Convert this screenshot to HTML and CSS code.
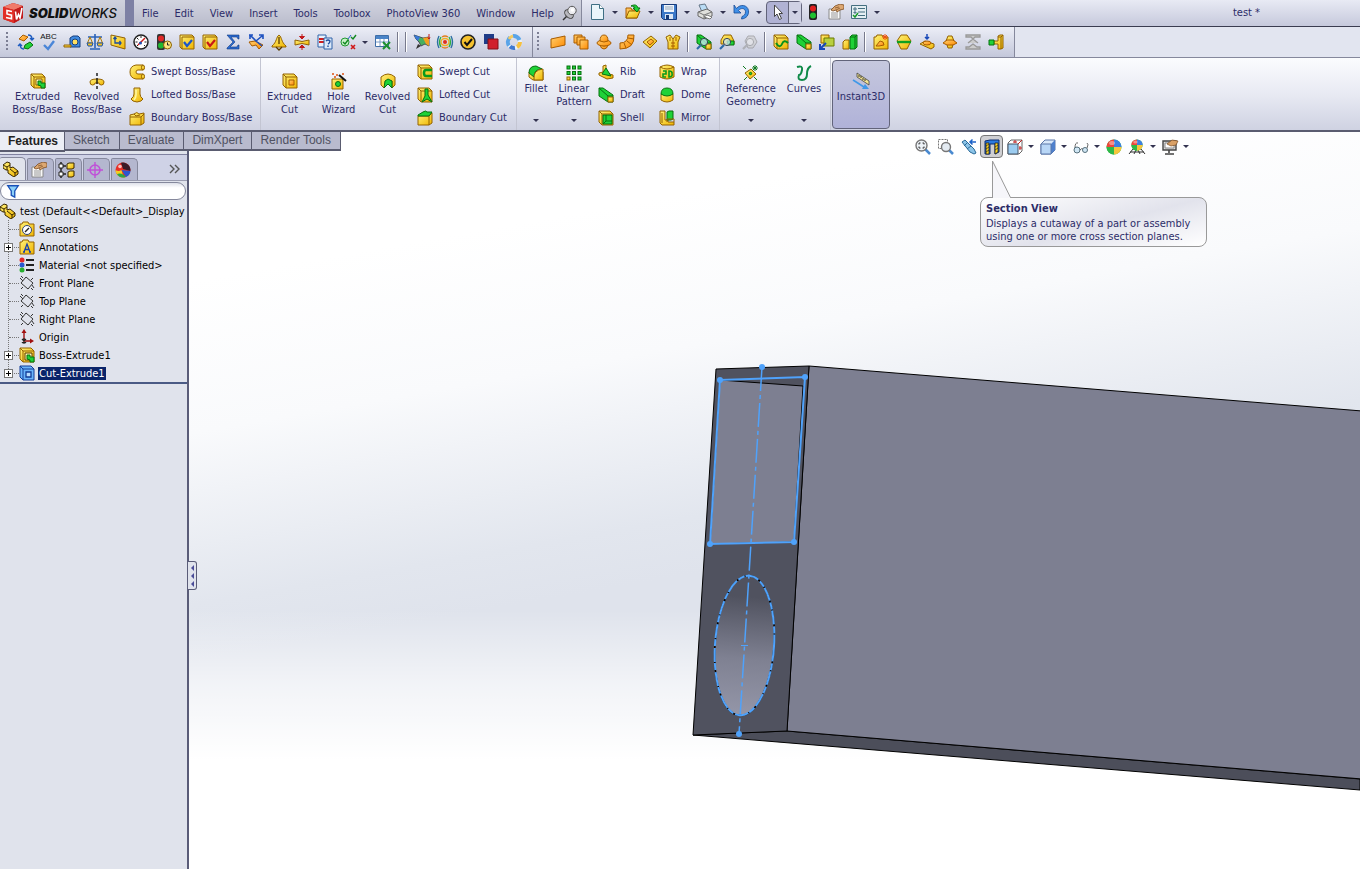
FILE: index.html
```html
<!DOCTYPE html>
<html lang="en">
<head>
<meta charset="utf-8">
<title>SolidWorks - test</title>
<link rel="stylesheet" href="styles.css">
</head>
<body>
<svg class="defs" aria-hidden="true">
<defs>
<linearGradient id="gy" x1="0" y1="0" x2="1" y2="1"><stop offset="0" stop-color="#fff27a"/><stop offset="1" stop-color="#f0b400"/></linearGradient>
<linearGradient id="go" x1="0" y1="0" x2="1" y2="1"><stop offset="0" stop-color="#ffd070"/><stop offset="1" stop-color="#ff8a00"/></linearGradient>
</defs>
<symbol id="box" viewBox="0 0 16 16"><path class="y" d="M1 1h11l3 3v11H4l-3-3z"/><path class="ly" d="M1 1l3 3h11M4 4v11"/></symbol>
<symbol id="part" viewBox="0 0 16 16"><path class="y dk" d="M0 4l4-3 3 1v5l3-1 5 4v3l-4 3-6-4V9L3 9 0 7z"/><path class="ly dk" d="M0 4l4 2v3M4 6l3-2M7 8l5 4v3M12 12l3-2"/></symbol>
<symbol id="draft" viewBox="0 0 16 16"><path class="g" d="M1 1h4l10 7v7h-5L1 9z"/><path class="lg" d="M1 1l9 8h5M10 9v6"/><path class="y" d="M10 10h5v5h-5z"/></symbol>
<symbol id="lens" viewBox="0 0 16 16"><path d="M5 11l-4 4" stroke="#2b6aa8" stroke-width="2.2"/><circle cx="8" cy="8" r="3.6" fill="#cfeaf8" fill-opacity=".75" stroke="#345"/></symbol>
<symbol id="plane" viewBox="0 0 16 16"><path d="M7 2l7 6-5 6-7-6zM1 3l3 3M2 1l2 2M12 13l2 2M13 10l2 3M4 12l-2 2M14 3l-2 2" fill="none" stroke="#333"/></symbol>
<symbol id="folder" viewBox="0 0 16 16"><path class="y" d="M1 3h2l1-2h5l1 2h5v12H1z"/></symbol>
<symbol id="ball" viewBox="0 0 16 16"><circle cx="8" cy="8" r="7.5" fill="#2fb848"/><path d="M8 8V.5A7.500 7.500 0 0 0 .5 8z" fill="#f0453a"/><path d="M8 8V.5A7.500 7.500 0 0 1 15.500 8z" fill="#3e7fe0"/><path d="M8 8v7.500A7.500 7.500 0 0 0 15.500 8z" fill="#f6c63c"/><path d="M8 8H.5A7.500 7.500 0 0 0 8 15.500z" fill="#2fb848"/><ellipse cx="6" cy="4" rx="3" ry="2" fill="#fff" opacity=".4"/></symbol>
<symbol id="hand" viewBox="0 0 16 16"><path d="M1 5h11v10H1z" fill="#f8f8f8" stroke="#888"/><path d="M3 9h7M3 11h7M3 13h7" stroke="#999"/><path d="M3 6l4-4 5-2 4 1v4l-4 1-3 2-1-2-3 1z" fill="#dda872" stroke="#7a4a20" stroke-width=".8"/><path d="M7 4l4-1M8 6l4-2" stroke="#7a4a20" stroke-width=".7"/></symbol>
</svg>

<header class="titlebar">
  <div class="brand">
    <svg class="cube" viewBox="0 0 22 22" aria-hidden="true"><path d="M1 5l10-4 10 3v12l-9 5L1 17z" fill="#b01414"/><path d="M1 5l10-4 10 3-9 4z" fill="#f07a6a"/><path d="M12 8l9-4v12l-9 5z" fill="#c21a1a"/><path d="M1 5l11 3v13L1 17z" fill="#e22e26"/><path d="M10 9.500L5 8.500v3.500l4.500 1.200v3.500L4 15.500M13.500 9.500l1 8 2-5 1.500 3.500 2-10" fill="none" stroke="#fff" stroke-width="1.600"/></svg>
    <span class="name"><b>SOLID</b>WORKS</span>
  </div>
  <nav class="menu" aria-label="Main menu">
    <button>File</button><button>Edit</button><button>View</button><button>Insert</button><button>Tools</button><button>Toolbox</button><button>PhotoView 360</button><button>Window</button><button>Help</button>
    <button class="pin" aria-label="Pin menu"><svg viewBox="0 0 16 16"><path d="M6 10l-5 5" stroke="#333" stroke-width="1.500"/><ellipse cx="7" cy="9" rx="5" ry="3.500" transform="rotate(45 7 9)" fill="#b8b8be" stroke="#444"/><circle cx="10" cy="5.500" r="4.200" fill="#ececf0" stroke="#555"/><circle cx="10.500" cy="5" r="1.800" fill="#fff"/></svg></button>
  </nav>
  <div class="quick" role="toolbar" aria-label="Standard">
    <button class="qb" aria-label="New"><svg viewBox="0 0 16 16"><path d="M2.500.5h8l4 4v11h-12z" fill="#eaf5fa" stroke="#3f6f84"/><path d="M10.500.5v4h4" fill="#fff" stroke="#3f6f84"/></svg></button><button class="drop" aria-label="New options"></button>
    <button class="qb" aria-label="Open"><svg viewBox="0 0 16 16"><path class="o" d="M1 4h5l1 2h5v8H1z"/><path class="y" d="M1 14l3-7h11l-3 7z"/><path class="g" d="M6 2c4-2 6-1 7 2h2l-3 4-4-4h2c0-1-2-2-4-2z"/></svg></button><button class="drop" aria-label="Open options"></button>
    <button class="qb" aria-label="Save"><svg viewBox="0 0 16 16"><path d="M.5.5h15v15h-13l-2-2z" fill="#3c78c8" stroke="#173a7a"/><path d="M3 1h10v7H3z" fill="#eef4fb"/><path d="M4 3h8M4 5h8" stroke="#9ab"/><path d="M4 10h8v5H4z" fill="#dbe6f4"/><path d="M5 11h3v4H5z" fill="#173a7a"/></svg></button><button class="drop" aria-label="Save options"></button>
    <button class="qb" aria-label="Print"><svg viewBox="0 0 16 16"><path d="M2 1l6-1 3 6-6 2z" fill="#b9dcf5" stroke="#678"/><path d="M1 8l9-3 5 3v4l-8 3-6-3z" fill="#e0e0dc" stroke="#666"/><path d="M1 8l6 3 8-3M7 11v4" fill="none" stroke="#777"/><path d="M7 13l6 2 2-2-5-2z" fill="#fff" stroke="#777"/></svg></button><button class="drop" aria-label="Print options"></button>
    <button class="qb" aria-label="Undo"><svg viewBox="0 0 16 16"><path d="M1 1v8h7L5.500 6.500C8 3.500 12 4 12.500 7.500c.3 3-2 4.500-3.500 5l-.5 2.500c5-.5 7.500-4 7-8.500C14.500 1 7.500-.5 3.500 4.500z" fill="#3f8fe8" stroke="#164a94" stroke-width=".8"/></svg></button><button class="drop" aria-label="Undo options"></button>
    <div class="split"><button class="qb" aria-label="Select"><svg viewBox="0 0 16 16"><path d="M4.500 1v11.500l2.500-2.500 2.500 5.500 2-1-2.500-5h3.500z" fill="#fff" stroke="#444"/></svg></button><button class="drop" aria-label="Select options"></button></div>
    <button class="qb" aria-label="Rebuild"><svg viewBox="0 0 16 16"><rect x="4" y="0" width="8" height="16" rx="2" fill="#222"/><circle cx="8" cy="4.500" r="3" fill="#e02020"/><circle cx="8" cy="11.500" r="3" fill="#20c030"/></svg></button>
    <button class="qb" aria-label="File properties"><svg><use href="#hand"/></svg></button>
    <button class="qb" aria-label="Options"><svg viewBox="0 0 16 16"><path d="M.5 1.500h15v13H.5z" fill="#e4eef2" stroke="#456f80"/><path d="M3 4h2v2H3zM3 8h2v1H3zM7 4.500h7M7 8h7M7 11.500h7" fill="none" stroke="#456f80"/><path d="M2 11l2 2 3-4" fill="none" stroke="#1a9a2a" stroke-width="1.500"/></svg></button><button class="drop" aria-label="More options"></button>
  </div>
  <h1 class="doc">test *</h1>
</header>

<div class="tools">
  <div class="band" role="toolbar" aria-label="Tools">
    <i class="grip"></i>
    <button class="tb" aria-label="Exchange"><svg viewBox="0 0 16 16"><path class="o" d="M1 5l4-4 5 2-4 4z"/><path class="g" d="M7 11l5-3 3 3-5 4-4-1z"/><path d="M10 1c3 0 4 1 4 4m-2-1l2 2 2-2M6 15c-3 0-4-2-4-5m-2 2l2-2 2 2" fill="none" stroke="#1a5ac0" stroke-width="1.400"/></svg></button>
    <button class="tb spell" aria-label="Spelling"><span>ABC</span><svg viewBox="0 0 16 10"><path d="M3 4l4 4 6-8" fill="none" stroke="#4a86d8" stroke-width="2.400"/></svg></button>
    <button class="tb" aria-label="Measure"><svg viewBox="0 0 16 16"><path d="M6 4l3-2h5l2 2v9H6z" fill="#3f8ae0" stroke="#143c7c"/><circle cx="11" cy="8" r="3" fill="#ffe060" stroke="#143c7c"/><path class="y" d="M0 11h7v2H0z"/></svg></button>
    <button class="tb" aria-label="Mass properties"><svg viewBox="0 0 16 16"><path d="M8 0v14M3 15h10M1 3h14" stroke="#2a62b8" stroke-width="1.600"/><path d="M3 3L.5 9h5zM13 3l-2.500 6h5z" fill="none" stroke="#b07a00"/><path d="M0 9h6l-1 3H1zM10 9h6l-1 3h-4z" fill="#f4c020" stroke="#1f56a8"/></svg></button>
    <button class="tb" aria-label="Section properties"><svg viewBox="0 0 16 16"><path class="y" d="M1 1l14 3v11L1 11z"/><path d="M5 3v6h6M3.500 5L5 3l1.500 2M9.500 7L11 9l-1.500 2" fill="none" stroke="#1c4ea0" stroke-width="1.300"/></svg></button>
    <button class="tb" aria-label="Sensor"><svg viewBox="0 0 16 16"><circle cx="8" cy="8" r="7" fill="#fff" stroke="#222" stroke-width="1.500"/><path d="M8 2v2M2.500 8h2M4 4l1.500 1.500M11.500 8h2M4 12l1-1M12 12l-1-1" stroke="#222"/><path d="M5 11l7-7" stroke="#d01818" stroke-width="1.500"/><circle cx="7.500" cy="9" r="1.500" fill="#2050b0"/></svg></button>
    <button class="tb" aria-label="Performance"><svg viewBox="0 0 16 16"><rect x="1" width="8" height="16" rx="2" fill="#333"/><circle cx="5" cy="4.500" r="3" fill="#e02828"/><circle cx="5" cy="11.500" r="3" fill="#20b830"/><circle cx="11.500" cy="11" r="4" fill="#ffe680" stroke="#8a6000"/><path d="M11.500 8.500V11h2" fill="none" stroke="#222"/></svg></button>
    <button class="tb" aria-label="Check sketch"><svg viewBox="0 0 16 16"><path class="y" d="M1 1h12l2 2v12H3l-2-2z"/><path class="ly" d="M3 15V3h12"/><path d="M5 8l3 4 5-6" fill="none" stroke="#1c56c8" stroke-width="2.200"/></svg></button>
    <button class="tb" aria-label="Check"><svg viewBox="0 0 16 16"><path class="y" d="M1 1h12l2 2v12H3l-2-2z"/><path class="ly" d="M3 15V3h12"/><path d="M5 8l3 4 5-6" fill="none" stroke="#c81818" stroke-width="2.200"/></svg></button>
    <button class="tb" aria-label="Equations"><svg viewBox="0 0 16 16"><path d="M2 1h12v4h-1l-1-2H6l4 5-5 5h7l1-2h1v4H2v-1l6-6-6-7z" fill="#2a6ad0" stroke="#123a80" stroke-width=".6"/></svg></button>
    <button class="tb" aria-label="Deviation"><svg viewBox="0 0 16 16"><path class="o" d="M1 8l6-1 8 4-4 4-3-4-4 1z"/><path d="M8 7L3 2m5 5l6-5M1 1h4M2 1v4M11 1h4v4M8 7l6 5" fill="none" stroke="#1c50c0" stroke-width="1.600"/></svg></button>
    <button class="tb" aria-label="Import diagnostics"><svg viewBox="0 0 16 16"><path class="y" d="M8 1c3 2 2 7 7 11v1H1v-1c5-4 4-9 7-11z"/><path d="M8 3v7M5 13l3 3 3-3" fill="none" stroke="#5a3c00" stroke-width="1.300"/></svg></button>
    <button class="tb" aria-label="Thickness analysis"><svg viewBox="0 0 16 16"><path class="y" d="M1 6q7 3 14 0v5q-7-3-14 0z"/><path d="M8 0v4M8 12v4M5.500 2.500L8 5l2.500-2.500zM5.500 13.500L8 11l2.500 2.500z" fill="#d02020" stroke="#c01818"/></svg></button>
    <button class="tb" aria-label="Compare documents"><svg viewBox="0 0 16 16"><path d="M1 1h8v12H1z" fill="#eaf2fc" stroke="#2f62a8"/><path d="M2 5h5M2 8h5" stroke="#d02020" stroke-width="1.800"/><path d="M7 4h8v11H7z" fill="#dbe8f8" stroke="#2f62a8"/><path d="M9 7q2-2 4 0 0 2-2 3m0 1.500v1.500" fill="none" stroke="#2050a0" stroke-width="1.400"/></svg></button>
    <button class="tb" aria-label="Feature check"><svg viewBox="0 0 16 16"><circle cx="5" cy="8" r="4" fill="#c8f0c8" stroke="#209830"/><path d="M3 8l2 2 3-4M11 3l2 2 3-4" fill="none" stroke="#108820" stroke-width="1.400"/><path d="M11 11l4 4m0-4l-4 4" stroke="#d01818" stroke-width="1.600"/><path d="M8 5l3-4" stroke="#2a62c8"/></svg></button><button class="drop narrow" aria-label="Feature check options"></button>
    <button class="tb" aria-label="Design table"><svg viewBox="0 0 16 16"><path d="M.5 1.500h13v11H.5z" fill="#fff" stroke="#3f6ea8"/><path d="M1 2h12v3H1z" fill="#4a84c8"/><path d="M1 8h12M5 5v7M9 5v7" stroke="#7a9cc8"/><path d="M8 8l7 7m0-7l-7 7" stroke="#1c9030" stroke-width="2"/></svg></button>
    <i class="sep"></i><i class="sep"></i>
    <button class="tb" aria-label="Simulation"><svg viewBox="0 0 16 16"><path d="M0 1l9 3 6-1v9l-4-2-4 2-2-4-3-3z" fill="#48b060" stroke="#334" stroke-width=".8"/><path d="M9 4l6-1v9l-3-2z" fill="#f0a020"/><path d="M0 1l6 2-2 4-2-2z" fill="#3878d8"/><path d="M2 15l2-5 3 2z" fill="#333"/><path d="M15 0v5m-1.500-1.500L15 5l1-1.500" stroke="#c01818" fill="none"/></svg></button>
    <button class="tb" aria-label="Zebra stripes"><svg viewBox="0 0 16 16"><circle cx="8" cy="8" r="2" fill="#e03020"/><g fill="none" stroke-width="1.400"><ellipse cx="8" cy="8" rx="4" ry="3.500" stroke="#f0b020"/><path d="M4 3q-3 5 0 10m8-10q3 5 0 10" stroke="#30b040"/><path d="M2 2q-3 6 0 12m12-12q3 6 0 12" stroke="#2a70a0"/></g><path d="M5 3q3-2 6 0M5 13q3 2 6 0" fill="none" stroke="#e08020" stroke-width="1.500"/></svg></button>
    <button class="tb" aria-label="Design check"><svg viewBox="0 0 16 16"><circle cx="8" cy="8" r="7" fill="#f6c22e" stroke="#222" stroke-width="1.600"/><path d="M4.500 8l2.500 3 5-6" fill="none" stroke="#111" stroke-width="2"/></svg></button>
    <button class="tb" aria-label="Compare geometry"><svg viewBox="0 0 16 16"><path d="M1 0h10v10H1z" fill="#1f3c88"/><path d="M5 5h10v10H5z" fill="#d0202c" stroke="#801018"/></svg></button>
    <button class="tb" aria-label="Costing"><svg viewBox="0 0 16 16"><circle cx="8" cy="8" r="6" fill="none" stroke="#e8f0f8" stroke-width="4"/><path d="M3 11.500A6 6 0 0 1 4 3.500M7 2A6 6 0 0 1 13.500 6" fill="none" stroke="#5aa4e8" stroke-width="4"/><path d="M14 8A6 6 0 0 1 11 13" fill="none" stroke="#f6c040" stroke-width="4"/><path d="M9 14A6 6 0 0 1 4 12.500" fill="none" stroke="#3f78d0" stroke-width="4"/><path d="M3 5A6 6 0 0 1 7 2" fill="none" stroke="#f2c860" stroke-width="3"/></svg></button>
  </div>
  <div class="band" role="toolbar" aria-label="Mold tools">
    <i class="grip"></i>
    <button class="tb" aria-label="Planar surface"><svg viewBox="0 0 16 16"><path class="o" d="M1 5l14-3v9L1 14z"/></svg></button>
    <button class="tb" aria-label="Offset surface"><svg viewBox="0 0 16 16"><path class="o" d="M1 1h8v8H1z"/><path class="o" d="M4 3h8v8H4z"/><path class="o" d="M7 6h8v9H7z"/></svg></button>
    <button class="tb" aria-label="Radiate surface"><svg viewBox="0 0 16 16"><path class="o" d="M4 11q4 2 8 0-1 4-4 4t-4-4z"/><ellipse class="o" cx="8" cy="9" rx="7" ry="3"/><path class="o" d="M4 7q0-6 4-6t4 6q-4 2-8 0z"/></svg></button>
    <button class="tb" aria-label="Swept surface"><svg viewBox="0 0 16 16"><path class="o" d="M9 1h6q1 14-14 14V9q8 0 8-8z"/><path class="lo" d="M9 4l6 1M8 7l5 4M5 9l2 5"/></svg></button>
    <button class="tb" aria-label="Surface fill"><svg viewBox="0 0 16 16"><path class="y" d="M1 8l8-6 6 5-7 7z"/><path class="o" d="M5 8l4-3 3 2.500L8 11z"/></svg></button>
    <button class="tb" aria-label="Knit surface"><svg viewBox="0 0 16 16"><path class="y" d="M1 3l4-2 3 4 3-4 4 2-2 5v7H3V8z"/><path class="lo" d="M8 5v10M5 3v4M11 3v4M6 9h4M6 12h4"/></svg></button>
    <i class="sep"></i>
    <button class="tb" aria-label="Draft analysis"><svg><use href="#draft"/><use href="#lens"/></svg></button>
    <button class="tb" aria-label="Undercut analysis"><svg viewBox="0 0 16 16"><path class="y" d="M2 6l3-5h7l3 6v3H2z"/><path class="g" d="M8 7h7v4H9z"/><use href="#lens"/></svg></button>
    <button class="tb" aria-label="Parting line analysis" disabled><svg class="dim" viewBox="0 0 16 16"><path d="M3 7l3-5h6l3 6-4 6H6z" fill="#ccc" stroke="#888"/><path d="M5 11l-4 4" stroke="#999" stroke-width="2.200"/><circle cx="8" cy="8" r="3.600" fill="#e8e8e8" stroke="#888"/></svg></button>
    <i class="sep"></i>
    <button class="tb" aria-label="Split line"><svg viewBox="0 0 16 16"><use href="#box"/><path d="M3 9q4 6 6 1t6-1" fill="none" stroke="#08901c" stroke-width="2"/></svg></button>
    <button class="tb" aria-label="Mold draft"><svg><use href="#draft"/></svg></button>
    <button class="tb" aria-label="Move face"><svg viewBox="0 0 16 16"><path class="y" d="M2 1h8v8H2z"/><path d="M5 4h10v8H5z" fill="#b8d040" stroke="#6a7a00"/><path d="M7 9l-5 5m-1-4v5h5" fill="none" stroke="#1848b8" stroke-width="2"/></svg></button>
    <button class="tb" aria-label="Scale"><svg viewBox="0 0 16 16"><path class="y" d="M1 8l2-2h4v9H1z"/><path class="g" d="M8 3l2-2h5v12l-2 2H8z"/><path class="lg" d="M8 3h5v12M13 3l2-2"/></svg></button>
    <i class="sep"></i>
    <button class="tb" aria-label="Insert mold folders"><svg viewBox="0 0 16 16"><use href="#folder"/><path class="o" d="M3 12l4-5 3 1 1 3-5 1z"/><path d="M12 0v6M9 3h6M10 1l4 4m0-4l-4 4" stroke="#f05010"/></svg></button>
    <button class="tb" aria-label="Parting lines"><svg viewBox="0 0 16 16"><path class="y" d="M1 7l4-6h6l4 6-4 8H5z"/><path d="M1 8h14" stroke="#10a020" stroke-width="2.400"/></svg></button>
    <button class="tb" aria-label="Shut-off surfaces"><svg viewBox="0 0 16 16"><path class="y" d="M1 10l5-3 9 3v3l-3 2z"/><ellipse class="o" cx="8" cy="9" rx="4" ry="2"/><path d="M8 0v5M6 3l2 2 2-2" fill="none" stroke="#1848b8" stroke-width="1.500"/></svg></button>
    <button class="tb" aria-label="Parting surfaces"><svg viewBox="0 0 16 16"><path class="y" d="M4 7l2-5h4l2 5-2 7H6z"/><path class="o" d="M1 9l4-3h6l4 3-4 2H5z"/></svg></button>
    <button class="tb" aria-label="Tooling split" disabled><svg viewBox="0 0 16 16"><path d="M1 1h14v2h-5l-2 2-2-2H1zM1 15h14v-2h-3l-4-3-4 3H1zM3 9l5-4 5 4" fill="#ccc" stroke="#999" stroke-width="1.300"/></svg></button>
    <button class="tb" aria-label="Core"><svg viewBox="0 0 16 16"><path class="y" d="M6 7h4V2l2-1h3v13l-2 1h-3V10H6z"/><path class="g" d="M1 6h5v5H1z"/><path class="ly" d="M13 3v12M10 3h3l2-2"/></svg></button>
  </div>
</div>

<section class="ribbon" aria-label="Features">
  <div class="group">
    <button class="big boss"><svg viewBox="0 0 16 16"><use href="#box"/><path d="M6 6h6v6H6z" fill="#fff9c0" stroke="#8a5c00"/><path class="g" d="M8 8h3v2h4v5h-4v-2L8 12z"/></svg>Extruded<br>Boss/Base</button>
    <button class="big boss"><svg viewBox="0 0 16 16"><path class="y" d="M1 9q0-3 7-3t7 3q0 3-2.500 3T10 10H6q0 2-2.500 2T1 9z"/><path d="M8 0v3M8 5v6M8 13v3" stroke="#111" stroke-width="1.400"/></svg>Revolved<br>Boss/Base</button>
    <div class="stack boss-list">
      <button><svg viewBox="0 0 16 16"><path class="y" d="M14 1H7Q1 2 1 8t6 7h7v-5H9q-2 0-2-2t2-2h5z"/><ellipse class="y" cx="14" cy="3.500" rx="1.500" ry="2.500"/><ellipse class="y" cx="14" cy="12.500" rx="1.500" ry="2.500"/></svg>Swept Boss/Base</button>
      <button><svg viewBox="0 0 16 16"><path class="y" d="M5 1h6v6q0 3 3 5l-2 2q-4 2-8 0l-2-2q3-2 3-5z"/><path d="M7 3v5q0 3-2 5" fill="none" stroke="#fff8a0" stroke-width="1.500"/></svg>Lofted Boss/Base</button>
      <button><svg viewBox="0 0 16 16"><path class="y" d="M1 5l4-1q3-3 5 0l5-1v10l-3 2H1z"/><path class="ly" d="M1 7h11v8M12 7l3-3M5 4l2 2 4-1"/></svg>Boundary Boss/Base</button>
    </div>
  </div>
  <div class="group cuts">
    <button class="big"><svg viewBox="0 0 16 16"><use href="#box"/><path class="o" d="M7 7h5v5H7z"/></svg>Extruded<br>Cut</button>
    <button class="big"><svg viewBox="0 0 16 16"><path class="y" d="M1 6h10l1 1v9H1z"/><circle class="g" cx="7" cy="11" r="2.500"/><path d="M8 2l7 6" stroke="#111" stroke-width="2"/><path d="M1 1h2M5 2h2M3 4h2M11 1h2" stroke="#e05010" stroke-width="1.500"/></svg>Hole<br>Wizard</button>
    <button class="big"><svg viewBox="0 0 16 16"><path class="y" d="M1 4q7-6 14 0v8l-3 3V8H8l-4 7-3-3z"/><path class="g" d="M4 15l1-7 3-2 4 2v7l-4-4z"/></svg>Revolved<br>Cut</button>
    <div class="stack cut-list">
      <button><svg viewBox="0 0 16 16"><use href="#box"/><path d="M15 6H9q-2 0-2 3t2 3h6" fill="none" stroke="#0a9a1c" stroke-width="2.500"/></svg>Swept Cut</button>
      <button><svg viewBox="0 0 16 16"><use href="#box"/><path class="g" d="M8 2h3v6l4 7-5-3-5 3 3-6z"/></svg>Lofted Cut</button>
      <button><svg viewBox="0 0 16 16"><path class="y" d="M1 6h11l3-3v10l-3 2H1z"/><path class="g" d="M1 5l5-3q3-2 4 0h5l-3 4H1z"/><path class="ly" d="M12 6v9"/></svg>Boundary Cut</button>
    </div>
  </div>
  <div class="group">
    <button class="big top fillet"><svg viewBox="0 0 16 16"><path class="y" d="M1 7h14v8H5l-4-3z"/><path class="g" d="M1 8q0-7 7-7l6 3q-8 0-8 8z"/><path class="y" d="M6 14q-1-9 9-10v11H6z"/></svg>Fillet<i class="caret"></i></button>
    <button class="big top linear"><svg viewBox="0 0 16 16"><g class="g"><rect x="1" y="1" width="3" height="3"/><rect x="6.500" y="1" width="3" height="3"/><rect x="12" y="1" width="3" height="3"/><rect x="1" y="6.500" width="3" height="3"/><rect x="6.500" y="6.500" width="3" height="3"/><rect x="12" y="6.500" width="3" height="3"/><rect x="6.500" y="12" width="3" height="3"/><rect x="12" y="12" width="3" height="3"/></g><rect class="y" x="1" y="12" width="3" height="3"/></svg>Linear<br>Pattern<i class="caret"></i></button>
    <div class="stack pair">
      <button><svg viewBox="0 0 16 16"><path class="y" d="M5 2l3-1v8l7 2v3l-6 1-8-4v-2l4-1z"/><path class="g" d="M8 4l5 8-9-2z"/></svg>Rib</button>
      <button><svg><use href="#draft"/></svg>Draft</button>
      <button><svg viewBox="0 0 16 16"><use href="#box"/><path class="g" d="M5 5h9v9H5z"/><path class="lg" d="M8 5v6l-3 3M8 11h6"/></svg>Shell</button>
    </div>
    <div class="stack pair">
      <button><svg viewBox="0 0 16 16"><path class="y" d="M1 3q7-4 14 0v10q-7 4-14 0z"/><path class="ly" d="M1 3q7 4 14 0"/><path d="M4 7h3v3H4v3h3M10 7v6q4 0 3-4 0-2-3-2z" fill="none" stroke="#0a9a1c" stroke-width="1.600"/></svg>Wrap</button>
      <button><svg viewBox="0 0 16 16"><path class="y" d="M2 7h12v6q-6 4-12 0z"/><path class="g" d="M2 7q0-6 6-6t6 6q-6 4-12 0z"/></svg>Dome</button>
      <button><svg viewBox="0 0 16 16"><path class="y" d="M1 1h5v9h3v2h6v3H3l-2-2z"/><path class="g" d="M8 2l2-1h4v8l-2 1H8z"/><path class="ly" d="M3 3v10M8 12V9h7v3"/></svg>Mirror</button>
    </div>
  </div>
  <div class="group">
    <button class="big top ref"><svg viewBox="0 0 16 16"><path class="y" d="M2 8l6-4 5 5-6 5z"/><circle class="g" cx="7.500" cy="8.500" r="1.200"/><path d="M0 1l3 3M1 15l3-3M11 12l3 3M12 0v6M9 3h6M10 1l4 4m0-4l-4 4" stroke="#107a20"/></svg>Reference<br>Geometry<i class="caret"></i></button>
    <button class="big top curves"><svg viewBox="0 0 16 16"><path d="M1 2q6-2 5 3T3 10q-2 5 3 5t5-6 4-8" fill="none" stroke="#0f8a48" stroke-width="2"/></svg>Curves<i class="caret"></i></button>
  </div>
  <button class="big instant" aria-pressed="true"><svg viewBox="0 0 16 16"><path d="M4 0l12 8v4L4 4z" fill="#f4e490" stroke="#444" stroke-width=".8"/><path d="M6 2v2M8 3v2M10 5v2M12 6v2" stroke="#333"/><path d="M0 7l11 7" stroke="#3f98e8" stroke-width="1.600"/><path d="M16 16H9l3-5z" fill="#3f98e8"/></svg>Instant3D</button>
</section>

<main class="workspace">
  <nav class="tabs" aria-label="Command tabs"><button class="active">Features</button><button>Sketch</button><button>Evaluate</button><button>DimXpert</button><button>Render Tools</button></nav>

  <aside class="side">
    <div class="side-tabs">
      <button class="on" aria-label="Feature tree"><svg><use href="#part"/></svg></button>
      <button aria-label="Properties"><svg><use href="#hand"/></svg></button>
      <button aria-label="Configurations"><svg viewBox="0 0 16 16"><path d="M2 0v16M2 4h5M2 12h5" stroke="#222" stroke-width="1.500"/><path d="M0 2h4v4H0zM0 10h4v4H0z" fill="#fff" stroke="#222"/><path class="y dk" d="M8 2l2-1h5v5l-2 1H8z"/><path class="y dk" d="M9 10l2-1h4v5l-2 1H9z"/></svg></button>
      <button aria-label="Dimensions"><svg viewBox="0 0 16 16"><circle cx="8" cy="8" r="5" fill="none" stroke="#c050d8" stroke-width="1.600"/><path d="M8 0v16M0 8h16" stroke="#c050d8" stroke-width="1.400"/></svg></button>
      <button aria-label="Display"><svg viewBox="0 0 16 16"><circle cx="8" cy="8" r="7.500" fill="#e83028"/><path d="M6 .8A7.500 7.500 0 0 1 15.400 9L8 7z" fill="#3a1c28"/><path d="M.5 8q3 2 6 0l2 7.500A7.500 7.500 0 0 1 .5 8z" fill="#f4cc20"/><path d="M6.500 8l9 1A7.500 7.500 0 0 1 11 15z" fill="#2a58d0"/><path d="M2 12q5-2 9 3-6 2-9-3z" fill="#28a848"/><circle cx="5" cy="4.500" r="1.800" fill="#fff" opacity=".7"/></svg></button>
      <button class="more" aria-label="More panels"><svg viewBox="0 0 16 16"><path d="M4 4l4 4-4 4M9 4l4 4-4 4" fill="none" stroke="#555" stroke-width="1.400"/></svg></button>
    </div>
    <label class="filter"><svg viewBox="0 0 16 16" aria-hidden="true"><path d="M2 2h12l-4 6v7l-4-2V8z" fill="#8cd0f8" stroke="#1850b8" stroke-width="1.500"/></svg><input type="text" aria-label="Filter tree"></label>
    <ul class="tree">
      <li class="root"><svg><use href="#part"/></svg><span>test (Default&lt;&lt;Default&gt;_Display</span></li>
      <li><svg viewBox="0 0 16 16"><use href="#folder"/><circle cx="8" cy="9" r="4.500" fill="#fff" stroke="#347"/><path d="M6 11l4-4" stroke="#222" stroke-width="1.500"/></svg><span>Sensors</span></li>
      <li><button class="plus" aria-label="Expand Annotations"></button><svg viewBox="0 0 16 16"><use href="#folder"/><path d="M5 13l3-8 3 8M6 10.500h4M4 13h2M10 13h2" fill="none" stroke="#1840a8" stroke-width="1.300"/></svg><span>Annotations</span></li>
      <li><svg viewBox="0 0 16 16"><circle cx="3" cy="3" r="2.500" fill="#e02828"/><circle cx="3" cy="8" r="2.500" fill="#2858d0"/><circle cx="3" cy="13" r="2.500" fill="#28b030"/><path d="M7 3h8M7 8h8M7 13h8" stroke="#222" stroke-width="1.800"/></svg><span>Material &lt;not specified&gt;</span></li>
      <li><svg><use href="#plane"/></svg><span>Front Plane</span></li>
      <li><svg><use href="#plane"/></svg><span>Top Plane</span></li>
      <li><svg><use href="#plane"/></svg><span>Right Plane</span></li>
      <li><svg viewBox="0 0 16 16"><path d="M5 3v9h8" fill="none" stroke="#a01010" stroke-width="1.400"/><path d="M5 0l2.500 4h-5zM15 12l-4 2.500v-5z" fill="#a01010"/><path d="M3 10l4 4m0-4l-4 4M5 9v6" stroke="#222" stroke-width="1.200"/></svg><span>Origin</span></li>
      <li><button class="plus" aria-label="Expand Boss-Extrude1"></button><svg viewBox="0 0 16 16"><use href="#box"/><path d="M6 6h7v7H6z" fill="#fff7b0" stroke="#5a3c00"/><path class="g" d="M8 8h3v2h4v5h-4v-2L8 12z"/></svg><span>Boss-Extrude1</span></li>
      <li><button class="plus" aria-label="Expand Cut-Extrude1"></button><svg viewBox="0 0 16 16"><path d="M1 1h11l3 3v11H4l-3-3z" fill="#6ab4fa" stroke="#123c98"/><path d="M1 1l3 3h11M4 4v11" fill="none" stroke="#123c98"/><path d="M7 7h5v5H7z" fill="#b8dcff" stroke="#123c98" stroke-width="1.300"/></svg><span class="sel">Cut-Extrude1</span></li>
    </ul>
    <button class="handle" aria-label="Collapse panel"><i></i><i></i><i></i></button>
  </aside>

  <section class="stage" aria-label="Model view">
    <svg class="model" viewBox="189 132 1171 737" preserveAspectRatio="xMinYMin slice" role="img" aria-label="Block with rectangular and elliptical cuts">
      <defs>
        <linearGradient id="sky" gradientUnits="userSpaceOnUse" x1="480" y1="230" x2="545" y2="600"><stop offset="0" stop-color="#fff"/><stop offset=".4" stop-color="#f9fafc"/><stop offset=".85" stop-color="#e2e6ee"/><stop offset="1" stop-color="#dfe3ec"/></linearGradient>
        <linearGradient id="floor" x1="0" y1="0" x2="0" y2="1"><stop offset="0" stop-color="#fff" stop-opacity="0"/><stop offset=".5" stop-color="#fff" stop-opacity=".6"/><stop offset="1" stop-color="#fff"/></linearGradient>
        <linearGradient id="bore" x1="0" y1="0" x2="0" y2="1"><stop offset=".15" stop-color="#50525f"/><stop offset=".6" stop-color="#7f8192"/><stop offset="1" stop-color="#9496a8"/></linearGradient>
      </defs>
      <rect x="189" y="132" width="1171" height="737" fill="url(#sky)"/>
      <rect x="189" y="610" width="1171" height="150" fill="url(#floor)"/>
      <rect x="189" y="759" width="1171" height="110" fill="#fff"/>
      <g stroke="#000" stroke-linejoin="round">
        <path d="M693 735l94-4 573 48v11z" fill="#4c4e5a"/>
        <path d="M1362 411v368L787 731l22-365z" fill="#7d7f91"/>
        <path d="M716 369l93-3-22 365-94 4z" fill="#50525f"/>
        <path d="M720 380l83 6-9 156-84 2z" fill="#7d7f91"/>
        <ellipse cx="744.500" cy="645.500" rx="29.500" ry="70" transform="rotate(4 744.500 645.500)" fill="url(#bore)" stroke-width="1.500"/>
      </g>
      <g fill="none" stroke="#4fa2fb" stroke-width="2">
        <path d="M720 380l85-3-11 165-84 2z"/>
        <ellipse cx="744.500" cy="645.500" rx="29.500" ry="70" transform="rotate(4 744.500 645.500)" stroke-dasharray="14 2 7 1"/>
        <path d="M762 367l-23 367" stroke-width="1.500" stroke-dasharray="24 4 4 4"/>
        <path d="M741 645.500h7" stroke-width="1"/>
      </g>
      <g fill="#4fa2fb"><circle cx="762" cy="367" r="3"/><circle cx="720" cy="380" r="3"/><circle cx="805" cy="377" r="3"/><circle cx="710" cy="544" r="3"/><circle cx="794" cy="542" r="3"/><circle cx="739" cy="734" r="3"/></g>
    </svg>

    <div class="hud" role="toolbar" aria-label="View">
      <button class="tb" aria-label="Zoom to fit"><svg viewBox="0 0 16 16"><path d="M10 10l5 5" stroke="#4a8ad0" stroke-width="2.500"/><circle cx="6.500" cy="6.500" r="5.500" fill="#eef3f8" stroke="#777" stroke-width="1.400"/><path d="M4 5.500V4h1.500M7.500 4H9v1.500M9 7.500V9H7.500M5.500 9H4V7.500" fill="none" stroke="#333"/></svg></button>
      <button class="tb" aria-label="Zoom to area"><svg viewBox="0 0 16 16"><path d="M.5.5h9v9h-9z" fill="none" stroke="#777" stroke-dasharray="2 1"/><path d="M11 11l4 4" stroke="#4a8ad0" stroke-width="2.500"/><circle cx="8" cy="8" r="4.500" fill="#e4ebf2" stroke="#777" stroke-width="1.400"/></svg></button>
      <button class="tb" aria-label="Previous view"><svg viewBox="0 0 16 16"><path d="M1 3l3-2 9 9 2 4-2 1-4-2z" fill="#8cc4e8" stroke="#2a6a98"/><path d="M3 7l4-4M6 10l4-3" stroke="#2a6a98"/><path d="M15 3H9m2.500-2.500L9 3l2.500 2.500" fill="none" stroke="#1c62c8" stroke-width="1.500"/></svg></button>
      <button class="tb pressed" aria-label="Section view"><svg viewBox="0 0 16 16"><path d="M1 2l5-1h9v12l-4 2V5H6v10H1z" fill="#2a7ae0" stroke="#0c2c70"/><path d="M2 4h3v11H2zM11 4h3v9l-3 2z" fill="#ffd820" stroke="#222" stroke-width=".8"/><path d="M2 7l3-2M2 10l3-2M2 13l3-2M11 8l3-2M11 11l3-2" stroke="#222" stroke-width=".7"/></svg></button>
      <button class="tb" aria-label="View orientation"><svg viewBox="0 0 16 16"><path d="M1 4l3-3h11v11l-3 3H1z" fill="#fff" stroke="#666"/><path d="M1 5h10v10H1z" fill="#9cccf0" stroke="#456"/><path d="M11 5l4-4M8 1v3M6 3h4M13 7v4M12 9h3" stroke="#c02020"/></svg></button><button class="drop hd" aria-label="Orientation options"></button>
      <button class="tb" aria-label="Display style"><svg viewBox="0 0 16 16"><path d="M1 5l4-4h10v10l-4 4H1z" fill="#d8e8fa" stroke="#5a76a8"/><path d="M11 5l4-4v10l-4 4z" fill="#4f80cc"/><path d="M1 5h10v10H1z" fill="#b8d6f6" stroke="#5a76a8"/></svg></button><button class="drop hd" aria-label="Style options"></button>
      <button class="tb" aria-label="Hide or show items"><svg viewBox="0 0 16 16"><path d="M2 9q0-6 3-5M14 9q2-4 0-5M7 11q1-2 3-1" fill="none" stroke="#666"/><circle cx="4" cy="11" r="3" fill="#cfe6f4" stroke="#56707c"/><circle cx="12" cy="11" r="2.500" fill="#cfe6f4" stroke="#56707c"/></svg></button><button class="drop hd" aria-label="Visibility options"></button>
      <button class="tb" aria-label="Edit appearance"><svg><use href="#ball"/></svg></button>
      <button class="tb" aria-label="Apply scene"><svg viewBox="0 0 16 16"><path d="M0 15l4-5h8l4 5M5 15l2-4M11 15l-2-4M1 13h14" fill="none" stroke="#333"/><g transform="translate(2 0) scale(.75)"><use href="#ball" width="16" height="16"/></g></svg></button><button class="drop hd" aria-label="Scene options"></button>
      <button class="tb" aria-label="View settings"><svg viewBox="0 0 16 16"><path d="M1 2h13v9H1z" fill="#ddd" stroke="#444" stroke-width="1.400"/><path d="M3 4h9v5H3z" fill="#fff" stroke="#888"/><path d="M7 11v3M3 15h9" stroke="#444" stroke-width="1.600"/><path d="M5 5l5-4 6 1-2 4-5 1z" fill="#d9a066" stroke="#7a4a20" stroke-width=".7"/></svg></button><button class="drop hd" aria-label="View options"></button>
    </div>
    <div class="tip" role="tooltip">
      <svg class="tail" viewBox="0 0 20 38" aria-hidden="true"><path d="M1.500 38V1L19.500 37.500V38" fill="#f6f6fa" stroke="#999"/></svg>
      <strong>Section View</strong>
      <p>Displays a cutaway of a part or assembly<br>using one or more cross section planes.</p>
    </div>
  </section>
</main>
</body>
</html>
```
FILE: styles.css
```css
* { box-sizing: border-box; }
html, body { height: 100%; margin: 0; }
body {
  display: flex;
  flex-direction: column;
  overflow: hidden;
  font: 11px/13px Tahoma, "DejaVu Sans Condensed", "DejaVu Sans", sans-serif;
  color: #2c2c68;
}
button {
  display: flex;
  align-items: center;
  justify-content: center;
  flex: none;
  margin: 0;
  padding: 0;
  border: 0;
  background: none;
  color: inherit;
  font: inherit;
  white-space: nowrap;
}
svg { flex: none; width: 16px; height: 16px; overflow: visible; }
.defs { position: absolute; width: 0; height: 0; }

.y { fill: url(#gy); stroke: #946200; }
.g { fill: #1fd238; stroke: #07700f; }
.o { fill: url(#go); stroke: #a85c00; }
.ly { fill: none; stroke: #946200; }
.lg { fill: none; stroke: #07700f; }
.lo { fill: none; stroke: #a85c00; }
.dk { stroke: #3a2800; }
.dim { opacity: .6; }

.drop { width: 14px; height: 20px; }
.drop::after, .caret {
  content: "";
  width: 0;
  border: 3px solid transparent;
  border-top-color: #333350;
  border-bottom: 0;
}
.drop.narrow { width: 12px; }
.drop.hd { width: 10px; }

/* title bar */
.titlebar {
  display: flex;
  flex: none;
  height: 27px;
  border-bottom: 1px solid #3a3c50;
  background: linear-gradient(#e8eaf4, #c6c9dc);
}
.brand {
  display: flex;
  align-items: center;
  gap: 5px;
  width: 134px;
  padding-left: 2px;
  border-right: 9px solid #7d80a4;
  background: linear-gradient(#cfd1dd, #bbbdcc);
  color: #111;
}
.cube { width: 22px; height: 22px; }
.name { font: italic 500 13px/16px Inter, "Liberation Sans", sans-serif; }
.name b { font-weight: 900; }
.menu {
  display: flex;
  width: 448px;
  border-right: 1px solid #85889c;
  background: linear-gradient(#d2d4e0, #b9bbcb);
}
.menu button { padding: 0 8px; }
.menu .pin { padding: 0; }
.quick { display: flex; align-items: center; padding: 0 0 2px 4px; }
.qb { width: 22px; height: 22px; }
.quick > .qb + .qb { margin-left: 1px; }
.split {
  display: flex;
  align-items: center;
  width: 36px;
  height: 23px;
  border: 1px solid #62647a;
  border-radius: 4px;
  background: #b0b2d4;
}
.split .qb { width: 21px; }
.split .drop { width: 13px; height: 21px; border-left: 1px solid #62647a; background: #cfd1e4; }
.doc { margin: 0 100px 0 auto; font: inherit; line-height: 26px; }

/* icon bands */
.tools { display: flex; flex: none; height: 31px; background: #e2e5f0; border-bottom: 1px solid #85889c; }
.band {
  display: flex;
  align-items: center;
  padding: 0 7px 0 3px;
  border-right: 1px solid #85889c;
  background: linear-gradient(#eceef7, #c3c7da);
}
.tb { width: 23px; height: 23px; }
.grip { width: 2px; height: 20px; margin: 0 7px 0 1px; background: repeating-linear-gradient(#7c7f94 0 2px, transparent 2px 4px); }
.band:first-child .grip { margin: 0 6px 0 3px; }
.sep { width: 2px; height: 20px; margin: 0 3px; border-left: 1px solid #77798c; background: #fff; }
.spell { flex-direction: column; color: #111; font: 8px/8px "Liberation Sans", sans-serif; }
.spell svg { height: 10px; }

/* ribbon */
.ribbon {
  display: flex;
  flex: none;
  height: 74px;
  border-bottom: 2px solid #5a5c70;
  background: linear-gradient(#fbfcfe, #e8eaf3 50%, #cfd2e2);
}
.group { display: flex; padding: 0 2px; border-right: 1px solid #c3c5d2; }
.group:first-child { padding-left: 8px; }
.group.cuts { padding: 0 0 0 4px; }
.big { flex-direction: column; width: 49px; height: 70px; padding-top: 2px; line-height: 13px; }
.big svg { margin-bottom: 1px; }
.boss { width: 59px; }
.big.top { position: relative; justify-content: flex-start; padding-top: 7px; }
.big .caret { position: absolute; bottom: 6px; }
.fillet { width: 34px; }
.linear { width: 42px; }
.big.ref { width: 58px; }
.big.curves { width: 48px; }
.stack { display: flex; flex-direction: column; padding-top: 2px; }
.stack button { justify-content: flex-start; gap: 6px; height: 23px; padding-left: 3px; }
.boss-list { width: 132px; }
.cut-list { width: 104px; padding-left: 2px; }
.pair { width: 61px; }
.instant {
  width: 58px;
  height: 69px;
  margin: 2px 0 0 1px;
  padding: 0 0 14px;
  justify-content: center;
  border: 1px solid #62647a;
  border-radius: 4px;
  background: linear-gradient(#c6c8de, #b0b2d8);
}

/* workspace */
.workspace { position: relative; display: grid; grid-template-columns: 189px 1fr; flex: 1; min-height: 0; }
.tabs { position: absolute; z-index: 2; top: 0; left: 0; display: flex; font: 12px/16px "Liberation Sans", Arial, sans-serif; color: #505262; }
.tabs button { height: 19px; padding: 0 9px 1px 8px; border: solid #5a5c70; border-width: 0 1px 2px 0; background: #b9bbce; }
.tabs .active { height: 20px; padding: 0 6px 0 8px; border-color: #5a5c70; background: #eceef5; color: #222; font-weight: bold; }

.side { position: relative; display: flex; flex-direction: column; min-width: 0; padding-top: 22px; border-right: 2px solid #5a5c78; background: #e0e3ec; color: #000; }
.side-tabs { display: flex; align-items: flex-end; gap: 1px; height: 27px; border-top: 1px solid #8082a0; border-bottom: 1px solid #9a9cb0; background: #cfd2e6; }
.side-tabs button { width: 27px; height: 22px; padding-right: 3px; border: 1px solid #85889c; border-bottom: 0; border-radius: 2px 5px 0 0; background: #b4b7cf; }
.side-tabs .on { width: 26px; height: 23px; border-left: 0; background: #e0e3ec; }
.side-tabs .more { margin-left: auto; padding: 0; border: 0; background: none; }
.filter { display: flex; align-items: center; height: 18px; margin: 1px 1px 2px 0; padding-left: 5px; border: 1px solid #85889c; border-radius: 9px; background: linear-gradient(#dfe1ea, #fff 30%); }
.filter svg { width: 14px; height: 14px; }
.filter input { flex: 1; min-width: 0; height: 14px; padding: 0 4px; border: 0; outline: 0; background: none; font: inherit; }
.tree { position: relative; margin: 0; padding: 0; list-style: none; border-bottom: 2px solid #4a5a84; }
.tree::before { content: ""; position: absolute; top: 18px; bottom: 9px; left: 8px; border-left: 1px dotted #777; }
.tree li { position: relative; display: flex; align-items: center; gap: 3px; height: 18px; padding-left: 19px; white-space: nowrap; }
.tree li::before { content: ""; position: absolute; left: 9px; top: 9px; width: 10px; border-top: 1px dotted #777; }
.tree .root { padding-left: 0; }
.tree .root::before { content: none; }
.tree li svg { position: relative; }
.tree span { padding: 0 1px; }
.sel { background: #0a246a; color: #fff; }
.plus { position: absolute; left: 4px; top: 5px; width: 9px; height: 9px; border: 1px solid #777; background: linear-gradient(#000, #000) center / 5px 1px no-repeat, linear-gradient(#000, #000) center / 1px 5px no-repeat, #fff; }
.handle { position: absolute; z-index: 2; top: 429px; right: -10px; flex-direction: column; gap: 2px; width: 9px; height: 29px; border: 1px solid #5a5c78; border-left: 0; border-radius: 0 3px 3px 0; background: #e0e3ec; }
.handle i { border: 3px solid transparent; border-left: 0; border-right-color: #4a4c98; }

.stage { position: relative; min-width: 0; overflow: hidden; background: #fff; }
.model { display: block; width: 100%; height: 100%; }
.hud { position: absolute; top: 3px; right: 169px; display: flex; align-items: center; }
.pressed { border: 1px solid #777; border-radius: 4px; background: #cfcfd2; }
.tip { position: absolute; top: 65px; right: 153px; width: 227px; padding: 4px 5px 3px; border: 1px solid #999; border-radius: 8px; background: linear-gradient(165deg, #fff, #e2e3ec 55%, #fff); }
.tip strong { display: block; line-height: 13px; }
.tip p { margin: 2px 0 0; white-space: nowrap; }
.tail { position: absolute; top: -38px; left: 10px; width: 20px; height: 38px; }
```
